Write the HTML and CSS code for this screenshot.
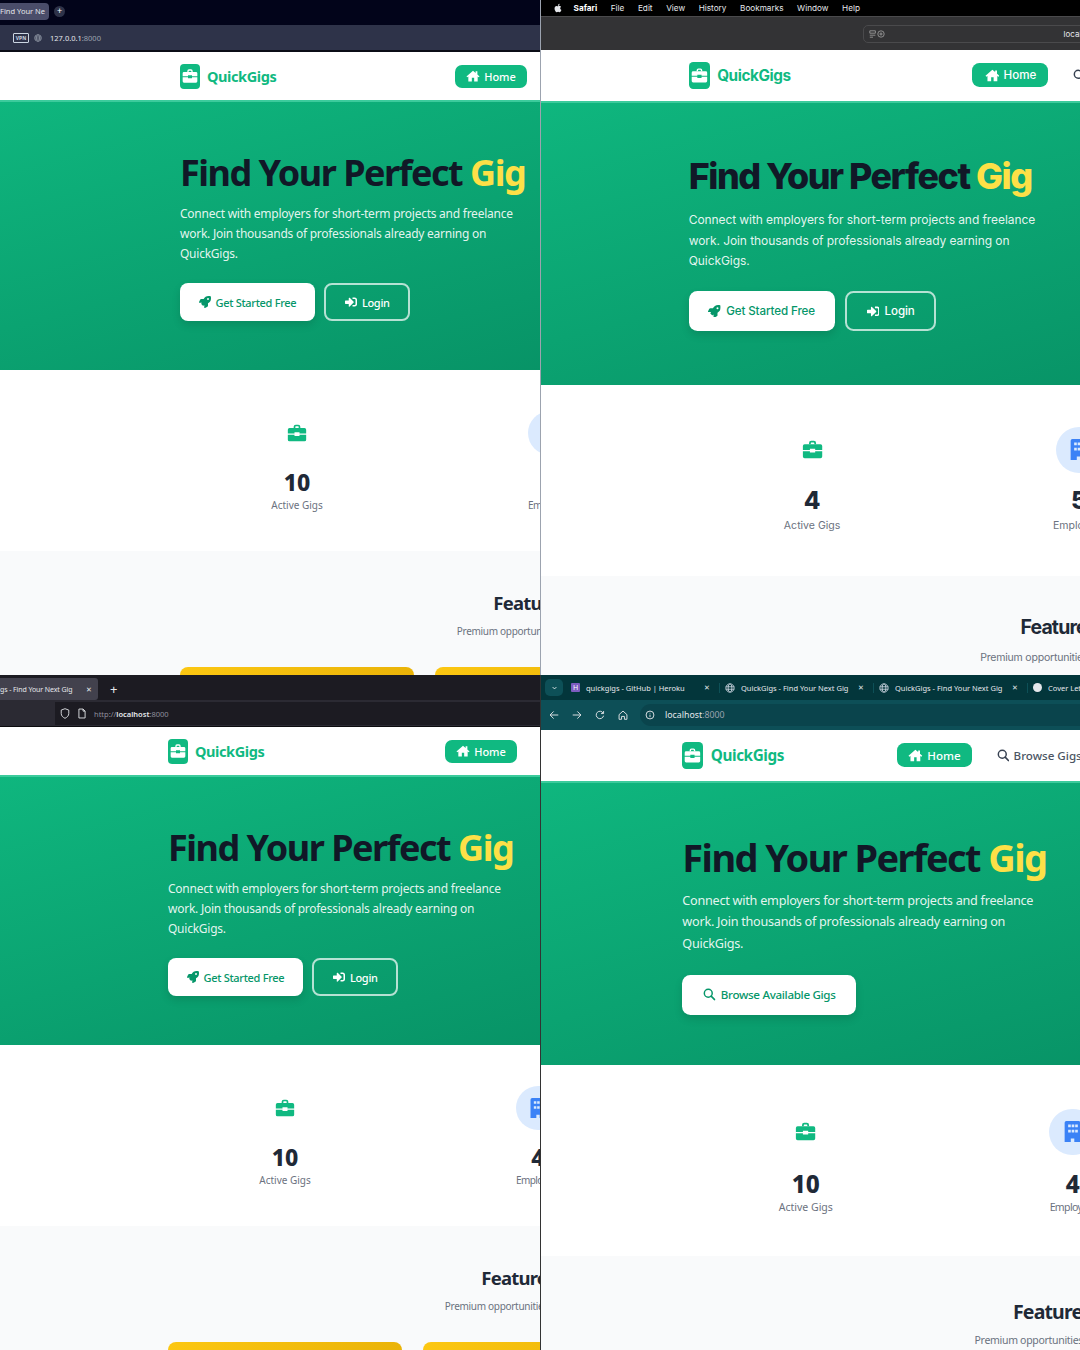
FILE: index.html
```html
<!DOCTYPE html>
<html lang="en">
<head>
    <meta charset="UTF-8">
    <meta name="viewport" content="width=device-width, initial-scale=1.0">
    <title>QuickGigs - Find Your Next Gig</title>
    <link rel="stylesheet" href="styles.css">
</head>
<body>
    <svg class="icon-defs" xmlns="http://www.w3.org/2000/svg">
        <symbol id="i-briefcase" viewBox="0 0 24 24">
            <path d="M8 6V4.500A2.500 2.500 0 0 1 10.500 2h3A2.500 2.500 0 0 1 16 4.500V6h-2V4.500a.5.5 0 0 0-.5-.5h-3a.5.5 0 0 0-.5.500V6z"/>
            <path d="M3 6h18a2 2 0 0 1 2 2v4.500h-8V11H9v1.500H1V8a2 2 0 0 1 2-2z"/>
            <path d="M1 14h8v1.500h6V14h8v6a2 2 0 0 1-2 2H3a2 2 0 0 1-2-2z"/>
        </symbol>
        <symbol id="i-home" viewBox="0 0 24 24">
            <path d="M12 3 .8 12.700l1.400 1.600L4 12.800V21.500h6V15h4v6.500h6v-8.700l1.800 1.500 1.400-1.600L19.500 9.300V4h-3v2.700z"/>
        </symbol>
        <symbol id="i-rocket" viewBox="0 0 512 512">
            <path d="M505.05 19.100a15.890 15.890 0 0 0-12.200-12.200C460.650 0 435.460 0 410.360 0c-103.200 0-165.100 55.200-211.290 128H94.870A48 48 0 0 0 52 154.490l-49.420 98.800A24 24 0 0 0 24.070 288h103.770l-22.470 22.470a32 32 0 0 0 0 45.250l50.900 50.910a32 32 0 0 0 45.260 0L224 384.160V488a24 24 0 0 0 34.700 21.490l98.700-49.390a47.910 47.910 0 0 0 26.500-42.900V312.790c72.590-46.300 128-108.400 128-211.090.1-25.200.1-50.400-6.850-82.600zM384 168a40 40 0 1 1 40-40 40 40 0 0 1-40 40z"/>
        </symbol>
        <symbol id="i-login" viewBox="0 0 512 512">
            <path d="M416 448h-84c-6.600 0-12-5.400-12-12v-40c0-6.600 5.400-12 12-12h84c17.700 0 32-14.300 32-32V160c0-17.700-14.300-32-32-32h-84c-6.600 0-12-5.400-12-12V76c0-6.600 5.400-12 12-12h84c53 0 96 43 96 96v192c0 53-43 96-96 96zm-47-201L201 79c-15-15-41-4.500-41 17v96H24c-13.300 0-24 10.700-24 24v96c0 13.300 10.700 24 24 24h136v96c0 21.500 26 32 41 17l168-168c9.300-9.400 9.300-24.600 0-34z"/>
        </symbol>
        <symbol id="i-search" viewBox="0 0 24 24">
            <circle cx="10" cy="10" r="7.500" fill="none" stroke="currentColor" stroke-width="2.800"/>
            <path d="M15.500 15.500 22 22" fill="none" stroke="currentColor" stroke-width="3" stroke-linecap="round"/>
        </symbol>
        <symbol id="i-building" viewBox="0 0 24 24">
            <path fill-rule="evenodd" d="M5 0h14a2 2 0 0 1 2 2v22h-7v-4h-4v4H3V2a2 2 0 0 1 2-2zm2 4v3h3V4zm4 0v3h3V4zm4 0v3h3V4zM7 10v3h3v-3zm4 0v3h3v-3zm4 0v3h3v-3z"/>
        </symbol>
        <symbol id="i-globe" viewBox="0 0 24 24">
            <g fill="none" stroke="currentColor" stroke-width="2">
                <circle cx="12" cy="12" r="10"/>
                <ellipse cx="12" cy="12" rx="4.500" ry="10"/>
                <path d="M2 9h20M2 15h20"/>
            </g>
        </symbol>
    </svg>

    <main class="screens">

        <!-- top left: opera -->
        <section class="screen screen-opera">
            <div class="chrome">
                <div class="opera-tabs">
                    <span class="opera-tab">Find Your Ne</span>
                    <span class="opera-plus">+</span>
                </div>
                <div class="opera-url">
                    <span class="vpn">VPN</span>
                    <svg class="opera-globe"><use href="#i-globe"/></svg>
                    <span class="url-text">127.0.0.1<span class="url-dim">:8000</span></span>
                </div>
            </div>
            <div class="site">
                <nav class="nav">
                    <a class="logo"><span class="logo-box"><svg><use href="#i-briefcase"/></svg></span>QuickGigs</a>
                    <div class="nav-links">
                        <a class="nav-home"><svg><use href="#i-home"/></svg>Home</a>
                        <a class="nav-link"><svg><use href="#i-search"/></svg>Browse Gigs</a>
                    </div>
                </nav>
                <header class="hero">
                    <h1>Find Your Perfect <span class="accent">Gig</span></h1>
                    <p>Connect with employers for short-term projects and freelance work. Join thousands of professionals already earning on QuickGigs.</p>
                    <div class="hero-actions">
                        <a class="btn btn-white"><svg><use href="#i-rocket"/></svg>Get Started Free</a>
                        <a class="btn btn-outline"><svg><use href="#i-login"/></svg>Login</a>
                    </div>
                </header>
                <div class="stats">
                    <div class="stat">
                        <span class="stat-icon"><svg><use href="#i-briefcase"/></svg></span>
                        <strong>10</strong>
                        <span class="stat-label">Active Gigs</span>
                    </div>
                    <div class="stat stat-employers">
                        <span class="stat-icon stat-icon-blue"><svg><use href="#i-building"/></svg></span>
                        <strong>4</strong>
                        <span class="stat-label">Employers</span>
                    </div>
                </div>
                <div class="featured">
                    <h2>Featured Gigs</h2>
                    <p>Premium opportunities with top employers</p>
                    <div class="featured-grid">
                        <div class="gig-card"></div>
                        <div class="gig-card"></div>
                    </div>
                </div>
            </div>
        </section>

        <!-- top right: safari -->
        <section class="screen screen-safari">
            <div class="chrome">
                <div class="mac-menu">
                    <svg class="mac-apple" viewBox="0 0 24 24"><path d="M17.300 12.600c0-2.500 2-3.700 2.100-3.800-1.200-1.700-3-1.900-3.600-1.900-1.500-.2-3 .9-3.800.9-.8 0-2-.9-3.300-.9-1.700 0-3.300 1-4.100 2.500-1.800 3.100-.5 7.600 1.200 10.100.9 1.200 1.900 2.600 3.200 2.500 1.300 0 1.800-.8 3.300-.8 1.500 0 2 .8 3.300.8 1.400 0 2.300-1.200 3.100-2.500 1-1.400 1.400-2.800 1.400-2.900-.1 0-2.800-1.100-2.800-4zM14.800 5.200c.7-.8 1.200-2 1-3.200-1 0-2.300.7-3 1.500-.7.700-1.200 1.900-1.100 3.100 1.200.1 2.400-.6 3.100-1.400z"/></svg>
                    <b>Safari</b><span>File</span><span>Edit</span><span>View</span><span>History</span><span>Bookmarks</span><span>Window</span><span>Help</span>
                </div>
                <div class="mac-bar">
                    <i class="dot dot-red"></i><i class="dot dot-yellow"></i><i class="dot dot-green"></i>
                    <svg class="mac-sidebar" viewBox="0 0 14 12"><rect x=".5" y=".5" width="13" height="11" rx="2"/><path d="M5 .5v11"/></svg>
                    <svg class="mac-caret" viewBox="0 0 8 6"><path d="M1 1.500 4 4.500 7 1.500"/></svg>
                    <svg class="mac-back" viewBox="0 0 8 14"><path d="M7 1 1 7l6 6"/></svg>
                    <svg class="mac-forward" viewBox="0 0 8 14"><path d="M1 1l6 6-6 6"/></svg>
                    <div class="mac-address">
                        <svg class="mac-reader" viewBox="0 0 20 10"><path d="M1 1h7v3H1zM1 6.500h7M1 9h4"/><circle cx="15" cy="5" r="4"/><path d="M15 3v4M13 5h4"/></svg>
                        <span>localhost</span>
                    </div>
                </div>
            </div>
            <div class="site">
                <nav class="nav">
                    <a class="logo"><span class="logo-box"><svg><use href="#i-briefcase"/></svg></span>QuickGigs</a>
                    <div class="nav-links">
                        <a class="nav-home"><svg><use href="#i-home"/></svg>Home</a>
                        <a class="nav-link"><svg><use href="#i-search"/></svg>Browse Gigs</a>
                    </div>
                </nav>
                <header class="hero">
                    <h1>Find Your Perfect <span class="accent">Gig</span></h1>
                    <p>Connect with employers for short-term projects and freelance work. Join thousands of professionals already earning on QuickGigs.</p>
                    <div class="hero-actions">
                        <a class="btn btn-white"><svg><use href="#i-rocket"/></svg>Get Started Free</a>
                        <a class="btn btn-outline"><svg><use href="#i-login"/></svg>Login</a>
                    </div>
                </header>
                <div class="stats">
                    <div class="stat">
                        <span class="stat-icon"><svg><use href="#i-briefcase"/></svg></span>
                        <strong>4</strong>
                        <span class="stat-label">Active Gigs</span>
                    </div>
                    <div class="stat stat-employers">
                        <span class="stat-icon stat-icon-blue"><svg><use href="#i-building"/></svg></span>
                        <strong>5</strong>
                        <span class="stat-label">Employers</span>
                    </div>
                </div>
                <div class="featured">
                    <h2>Featured Gigs</h2>
                    <p>Premium opportunities with top employers</p>
                </div>
            </div>
        </section>

        <!-- bottom left: firefox -->
        <section class="screen screen-firefox">
            <div class="chrome">
                <div class="fx-tabs">
                    <span class="fx-tab"><span>gs - Find Your Next Gig</span><em>&#10005;</em></span>
                    <span class="fx-plus">+</span>
                </div>
                <div class="fx-bar">
                    <div class="fx-url">
                        <svg class="fx-icon" viewBox="0 0 14 16"><path d="M7 1 1.500 3v5c0 3.500 2.500 5.500 5.500 7 3-1.500 5.500-3.500 5.500-7V3z"/></svg>
                        <svg class="fx-icon" viewBox="0 0 14 16"><path d="M2.500 1.500h6l3 3v10h-9zM8.500 1.500v3h3"/></svg>
                        <span class="url-text url-fx">http://<b>localhost</b>:8000</span>
                    </div>
                </div>
            </div>
            <div class="site">
                <nav class="nav">
                    <a class="logo"><span class="logo-box"><svg><use href="#i-briefcase"/></svg></span>QuickGigs</a>
                    <div class="nav-links">
                        <a class="nav-home"><svg><use href="#i-home"/></svg>Home</a>
                        <a class="nav-link"><svg><use href="#i-search"/></svg>Browse Gigs</a>
                    </div>
                </nav>
                <header class="hero">
                    <h1>Find Your Perfect <span class="accent">Gig</span></h1>
                    <p>Connect with employers for short-term projects and freelance work. Join thousands of professionals already earning on QuickGigs.</p>
                    <div class="hero-actions">
                        <a class="btn btn-white"><svg><use href="#i-rocket"/></svg>Get Started Free</a>
                        <a class="btn btn-outline"><svg><use href="#i-login"/></svg>Login</a>
                    </div>
                </header>
                <div class="stats">
                    <div class="stat">
                        <span class="stat-icon"><svg><use href="#i-briefcase"/></svg></span>
                        <strong>10</strong>
                        <span class="stat-label">Active Gigs</span>
                    </div>
                    <div class="stat stat-employers">
                        <span class="stat-icon stat-icon-blue"><svg><use href="#i-building"/></svg></span>
                        <strong>4</strong>
                        <span class="stat-label">Employers</span>
                    </div>
                </div>
                <div class="featured">
                    <h2>Featured Gigs</h2>
                    <p>Premium opportunities with top employers</p>
                    <div class="featured-grid">
                        <div class="gig-card"></div>
                        <div class="gig-card"></div>
                    </div>
                </div>
            </div>
        </section>

        <!-- bottom right: edge -->
        <section class="screen screen-edge">
            <div class="chrome">
                <div class="edge-tabs">
                    <span class="edge-menu"><svg viewBox="0 0 8 6"><path d="M1 1.500 4 4.500 7 1.500"/></svg></span>
                    <span class="edge-tab edge-tab-first"><i class="fav-heroku">H</i><span>quickgigs - GitHub | Heroku</span><em>&#10005;</em></span>
                    <span class="edge-tab"><svg class="fav-globe"><use href="#i-globe"/></svg><span>QuickGigs - Find Your Next Gig</span><em>&#10005;</em></span>
                    <span class="edge-tab"><svg class="fav-globe"><use href="#i-globe"/></svg><span>QuickGigs - Find Your Next Gig</span><em>&#10005;</em></span>
                    <span class="edge-tab"><i class="fav-dot"></i><span>Cover Letter</span></span>
                </div>
                <div class="edge-bar">
                    <svg class="edge-icon" viewBox="0 0 14 14"><path d="M13 7H1.500M6.500 2l-5 5 5 5"/></svg>
                    <svg class="edge-icon" viewBox="0 0 14 14"><path d="M1 7h11.500M7.500 2l5 5-5 5"/></svg>
                    <svg class="edge-icon" viewBox="0 0 14 14"><path d="M11.500 4.500A5.200 5.200 0 1 0 12 8M12 1.500v3.500H8.500"/></svg>
                    <svg class="edge-icon" viewBox="0 0 14 14"><path d="M1.500 6.500 7 1.500l5.500 5V13H9V9H5v4H1.500z"/></svg>
                    <div class="edge-url">
                        <svg class="edge-icon" viewBox="0 0 14 14"><circle cx="7" cy="7" r="5.500"/><path d="M7 6.500V10M7 4v1"/></svg>
                        <span class="url-text">localhost<span class="url-dim">:8000</span></span>
                    </div>
                </div>
            </div>
            <div class="site">
                <nav class="nav">
                    <a class="logo"><span class="logo-box"><svg><use href="#i-briefcase"/></svg></span>QuickGigs</a>
                    <div class="nav-links">
                        <a class="nav-home"><svg><use href="#i-home"/></svg>Home</a>
                        <a class="nav-link"><svg><use href="#i-search"/></svg>Browse Gigs</a>
                    </div>
                </nav>
                <header class="hero">
                    <h1>Find Your Perfect <span class="accent">Gig</span></h1>
                    <p>Connect with employers for short-term projects and freelance work. Join thousands of professionals already earning on QuickGigs.</p>
                    <div class="hero-actions">
                        <a class="btn btn-white"><svg class="btn-search"><use href="#i-search"/></svg>Browse Available Gigs</a>
                    </div>
                </header>
                <div class="stats">
                    <div class="stat">
                        <span class="stat-icon"><svg><use href="#i-briefcase"/></svg></span>
                        <strong>10</strong>
                        <span class="stat-label">Active Gigs</span>
                    </div>
                    <div class="stat stat-employers">
                        <span class="stat-icon stat-icon-blue"><svg><use href="#i-building"/></svg></span>
                        <strong>4</strong>
                        <span class="stat-label">Employers</span>
                    </div>
                </div>
                <div class="featured">
                    <h2>Featured Gigs</h2>
                    <p>Premium opportunities with top employers</p>
                </div>
            </div>
        </section>

    </main>
</body>
</html>
```

FILE: styles.css
```css
* {
    box-sizing: border-box;
}
body {
    margin: 0;
    font-family: "Noto Sans", "Open Sans", sans-serif;
    background: #fff;
}
.icon-defs {
    display: none;
}
.screens {
    display: grid;
    grid-template-columns: 540px 540px;
    grid-template-rows: 675px 675px;
    width: 1080px;
    height: 1350px;
    overflow: hidden;
}
.screen {
    overflow: hidden;
    position: relative;
    --left: 180px;
    --links: 178px;
}
.screen-safari {
    --left: 140px;
    --links: 172px;
    font-family: Inter, sans-serif;
    border-left: 1px solid #9ca3af;
}
.screen-firefox {
    --left: 168px;
    --links: 180px;
}
.screen-edge {
    --left: 134px;
    --links: 106px;
    border-left: 1px solid #333;
}
.screen-safari .site,
.screen-edge .site {
    zoom: 1.055;
}

/* the page itself */
.site {
    width: 1104px;
    background: #fff;
}
.nav {
    height: 50px;
    display: flex;
    align-items: center;
    padding-left: var(--left);
    border-bottom: 2px solid #3ccb9c;
    background: #fff;
}
.logo {
    width: 97px;
    display: flex;
    align-items: center;
    gap: 7px;
    font-size: 14.500px;
    font-weight: 700;
    letter-spacing: -0.400px;
    color: #10b981;
}
.logo-box {
    flex: none;
    width: 20px;
    height: 25px;
    border-radius: 4px;
    background: #10b981;
    display: flex;
    align-items: center;
    justify-content: center;
}
.logo-box svg {
    width: 16px;
    height: 16px;
    fill: #fff;
}
.nav-links {
    display: flex;
    align-items: center;
    gap: 23px;
    margin-left: var(--links);
}
.nav-home {
    width: 72px;
    height: 23px;
    border-radius: 7px;
    background: #10b981;
    color: #fff;
    font-size: 11px;
    font-weight: 500;
    display: flex;
    align-items: center;
    justify-content: center;
    gap: 4px;
}
.nav-home svg {
    width: 14px;
    height: 14px;
    fill: #fff;
}
.nav-link {
    display: flex;
    align-items: center;
    gap: 4px;
    font-size: 11px;
    font-weight: 500;
    color: #4b5563;
    white-space: nowrap;
}
.nav-link svg {
    width: 12px;
    height: 12px;
    color: #374151;
}

.hero {
    height: 268px;
    padding: 50px 0 0 var(--left);
    background: linear-gradient(165deg, #0fb67e 0%, #05875e 100%);
    color: #fff;
}
.screen-safari .hero {
    padding-top: 49px;
}
.hero h1 {
    margin: 0;
    font-size: 36px;
    line-height: 42px;
    font-weight: 700;
    letter-spacing: -1.500px;
    color: #111827;
}
.screen-safari .hero h1 {
    font-size: 34px;
    font-weight: 800;
    letter-spacing: -1.400px;
}
.hero .accent {
    color: #fde047;
}
.hero p {
    width: 350px;
    margin: 10px 0 0;
    font-size: 12px;
    line-height: 20px;
    letter-spacing: -0.250px;
    color: rgba(255, 255, 255, 0.9);
}
.screen-safari .hero p {
    margin-top: 11px;
    font-size: 11.400px;
    line-height: 19.500px;
    letter-spacing: -0.080px;
}
.hero-actions {
    display: flex;
    gap: 9.500px;
    margin-top: 19px;
}
.screen-safari .hero-actions {
    gap: 10px;
    margin-top: 18px;
}
.screen-edge .hero-actions {
    margin-top: 20px;
}
.btn {
    height: 38px;
    padding: 0 18.500px;
    border-radius: 8px;
    display: flex;
    align-items: center;
    gap: 5px;
    font-size: 11px;
    font-weight: 500;
    letter-spacing: -0.300px;
}
.screen-safari .btn {
    letter-spacing: -0.100px;
}
.screen-edge .btn {
    padding: 0 19.500px;
}
.btn svg {
    width: 12px;
    height: 12px;
    fill: currentColor;
}
.btn-white {
    background: #fff;
    color: #059669;
    box-shadow: 0 4px 8px rgba(0, 0, 0, 0.12);
}
.btn-outline {
    border: 2px solid rgba(255, 255, 255, 0.7);
    color: #fff;
}

.stats {
    height: 181px;
    padding: 41px 0 0 var(--left);
    display: grid;
    grid-template-columns: repeat(3, 234px);
    column-gap: 19px;
    background: #fff;
}
.screen-safari .stats {
    padding-top: 39px;
}
.stat {
    display: flex;
    flex-direction: column;
    align-items: center;
}
.stat-icon {
    width: 44px;
    height: 44px;
    border-radius: 50%;
    display: flex;
    align-items: center;
    justify-content: center;
}
.stat-icon svg {
    width: 20px;
    height: 20px;
    fill: #10b981;
}
.stat-icon-blue {
    background: #dbeafe;
}
.stat-icon-blue svg {
    fill: #3b82f6;
}
.stat strong {
    margin-top: 12px;
    font-size: 23px;
    line-height: 30px;
    font-weight: 800;
    color: #1f2937;
}
.screen-safari .stat strong {
    margin-top: 11px;
}
.stat-label {
    font-size: 10px;
    line-height: 16px;
    color: #6b7280;
}
.screen-safari .stat-label {
    margin-top: 2px;
}
.stat-employers .stat-label {
    letter-spacing: -0.600px;
}
.screen-safari .stat-employers .stat-label {
    letter-spacing: 0;
}

.featured {
    height: 400px;
    padding: 38px 0 0 var(--left);
    background: #f9fafb;
}
.screen-safari .featured {
    padding-top: 35px;
}
.featured h2 {
    width: 744px;
    margin: 0;
    text-align: center;
    font-size: 18.500px;
    line-height: 28px;
    font-weight: 700;
    letter-spacing: -0.800px;
    color: #1f2937;
}
.featured p {
    width: 744px;
    margin: 6px 0 0;
    text-align: center;
    font-size: 10px;
    line-height: 16px;
    letter-spacing: -0.300px;
    color: #6b7280;
}
.screen-safari .featured p {
    margin-top: 7px;
    letter-spacing: -0.200px;
}
.featured-grid {
    display: grid;
    grid-template-columns: repeat(3, 234px);
    column-gap: 21px;
    margin-top: 28px;
}
.gig-card {
    height: 60px;
    border-radius: 8px 8px 0 0;
    background: linear-gradient(90deg, #fcc712, #eab308);
}

/* browser bars */
.url-text {
    font-size: 7.500px;
    color: #e5e7eb;
}
.url-dim {
    color: #9ca3af;
}

.opera-tabs {
    height: 25px;
    background: #02041a;
    display: flex;
    align-items: center;
    padding-bottom: 2px;
    gap: 5px;
}
.opera-tab {
    width: 49px;
    height: 17px;
    border-radius: 0 4px 4px 0;
    background: #4a4d6a;
    color: #e5e7eb;
    font-size: 7.500px;
    line-height: 17px;
    white-space: nowrap;
    overflow: hidden;
}
.opera-plus {
    width: 11px;
    height: 11px;
    border-radius: 50%;
    background: #2e3349;
    color: #fff;
    font-size: 9px;
    line-height: 10px;
    text-align: center;
}
.opera-url {
    height: 27px;
    background: #2e3349;
    border-bottom: 2px solid #0b0d17;
    display: flex;
    align-items: center;
    padding-left: 13px;
}
.vpn {
    width: 16px;
    height: 10px;
    border: 1px solid #cbd5e1;
    border-radius: 1px;
    color: #cbd5e1;
    font-size: 5px;
    font-weight: 700;
    line-height: 8px;
    text-align: center;
}
.opera-globe {
    width: 8px;
    height: 8px;
    margin: 0 8px 0 5px;
    color: #9ca3af;
}

.mac-menu {
    height: 16px;
    background: #000;
    display: flex;
    align-items: center;
    gap: 13.600px;
    padding-left: 12px;
    color: #e5e7eb;
    font-size: 8.200px;
}
.mac-menu b {
    color: #fff;
    margin-left: -3px;
}
.mac-apple {
    width: 10px;
    height: 10px;
    fill: #e5e7eb;
}
.mac-bar {
    height: 34px;
    background: #333335;
    border-top: 1px solid #4a4a4c;
    display: flex;
    align-items: center;
    padding-left: 12px;
}
.mac-bar svg {
    fill: none;
    stroke: #a3a3a3;
    stroke-width: 1;
}
.dot {
    width: 8px;
    height: 8px;
    border-radius: 50%;
    margin-right: 4.500px;
}
.dot-red {
    background: #ff5f57;
}
.dot-yellow {
    background: #febc2e;
}
.dot-green {
    background: #28c840;
}
.mac-sidebar {
    width: 12px;
    height: 10px;
    margin-left: 13px;
}
.mac-caret {
    width: 5px;
    height: 4px;
    margin-left: 10px;
}
.mac-back {
    width: 6px;
    height: 10px;
    margin-left: 17px;
}
.mac-forward {
    width: 6px;
    height: 10px;
    margin-left: 16px;
    opacity: 0.4;
}
.mac-address {
    flex: none;
    width: 400px;
    height: 18px;
    margin-left: 240px;
    border: 1px solid #4a4a4c;
    border-radius: 5px;
    display: flex;
    align-items: center;
    padding-left: 3px;
    color: #e5e7eb;
    font-size: 8px;
}
.mac-reader {
    flex: none;
    width: 20px;
    height: 8px;
}
.mac-address span {
    margin-left: 177px;
}

.fx-tabs {
    height: 25px;
    background: #1c1b22;
    display: flex;
    align-items: center;
    gap: 12px;
    padding-top: 3px;
}
.fx-tab {
    width: 98px;
    height: 22px;
    border-radius: 0 3px 3px 0;
    background: #42414d;
    color: #e5e7eb;
    font-size: 7px;
    letter-spacing: -0.100px;
    display: flex;
    align-items: center;
    justify-content: space-between;
    padding: 0 6px 0 0;
}
.fx-tab em,
.edge-tab em {
    font-style: normal;
    font-size: 7px;
    color: #e5e7eb;
}
.fx-plus {
    color: #e5e7eb;
    font-size: 13px;
    line-height: 13px;
}
.fx-bar {
    height: 27px;
    background: #2b2a33;
    border-bottom: 1px solid #0c0c0f;
    padding: 2px 0 1px 55px;
}
.fx-url {
    height: 100%;
    background: #1c1b22;
    display: flex;
    align-items: center;
    gap: 7px;
    padding-left: 5px;
}
.fx-icon {
    width: 10px;
    height: 11px;
    fill: none;
    stroke: #e5e7eb;
    stroke-width: 1.300;
}
.url-fx {
    color: #8f8f9d;
}
.url-fx b {
    color: #e5e7eb;
    font-weight: 600;
}

.edge-tabs {
    height: 25px;
    background: #03363b;
    display: flex;
    align-items: center;
    padding-left: 4px;
    color: #e5e7eb;
    font-size: 7.500px;
}
.edge-menu {
    flex: none;
    width: 18px;
    height: 17px;
    border-radius: 5px;
    background: #0d5057;
    display: flex;
    align-items: center;
    justify-content: center;
}
.edge-menu svg {
    width: 5px;
    height: 4px;
    fill: none;
    stroke: #fff;
    stroke-width: 1.300;
}
.edge-tab {
    flex: none;
    width: 154px;
    padding: 0 9px 0 5px;
    display: flex;
    align-items: center;
    gap: 6px;
    border-right: 1px solid #0d5057;
    white-space: nowrap;
}
.edge-tab span {
    flex: 1;
}
.edge-tab-first {
    margin-left: 3px;
}
.fav-heroku {
    width: 9px;
    height: 9px;
    border-radius: 1px;
    background: #7c5cbf;
    color: #fff;
    font-size: 7px;
    font-style: normal;
    line-height: 9px;
    text-align: center;
}
.fav-globe {
    width: 10px;
    height: 10px;
    color: #cbd5e1;
}
.fav-dot {
    width: 9px;
    height: 9px;
    border-radius: 50%;
    background: #e5e7eb;
}
.edge-bar {
    height: 30px;
    background: #0d4f57;
    display: flex;
    align-items: center;
    padding-left: 8px;
    gap: 13px;
}
.edge-icon {
    flex: none;
    width: 10px;
    height: 10px;
    fill: none;
    stroke: #e5e7eb;
    stroke-width: 1.300;
}
.edge-url {
    flex: 1;
    height: 22px;
    margin-left: -1px;
    border-radius: 11px 0 0 11px;
    background: #0a444c;
    display: flex;
    align-items: center;
    gap: 10px;
    padding-left: 5px;
}
.edge-url .url-text {
    font-size: 8.800px;
}
```
